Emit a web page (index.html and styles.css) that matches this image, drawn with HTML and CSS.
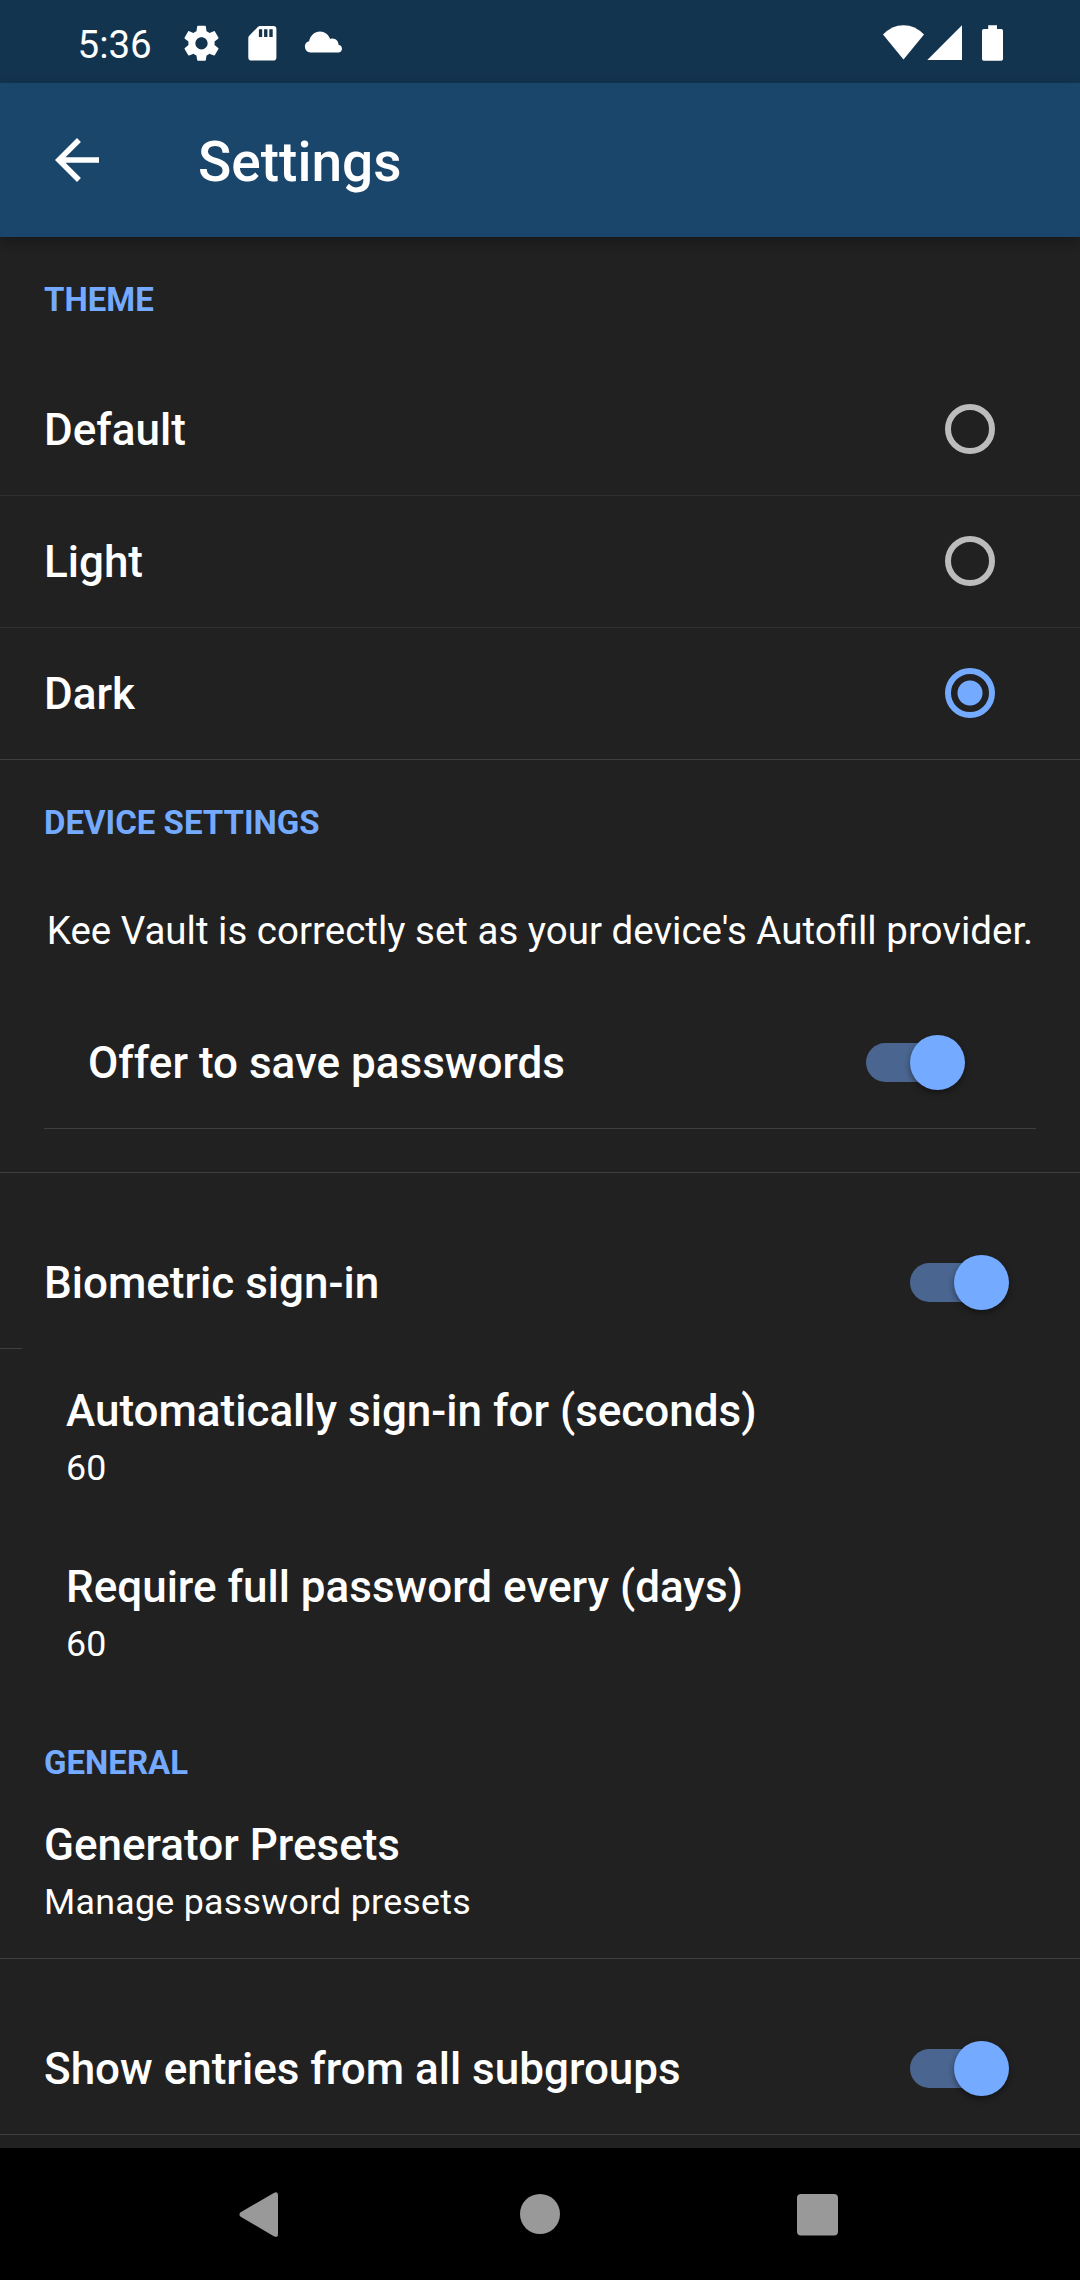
FILE: index.html
```html
<!DOCTYPE html>
<html lang="en">
<head>
  <meta charset="utf-8">
  <title>Settings</title>
  <link rel="stylesheet" href="styles.css">
</head>
<body>
  <div class="screen">
    <div class="status-bar">
      <span class="clock">5:36</span>
      <svg class="status-left" width="160" height="42" viewBox="180 22 160 42">
        <path transform="translate(180.5 22.3) scale(1.75)" d="M19.43 12.98c.04-.32.07-.64.07-.98s-.03-.66-.07-.98l2.11-1.65c.19-.15.24-.42.12-.64l-2-3.46c-.12-.22-.39-.3-.61-.22l-2.49 1c-.52-.4-1.08-.73-1.69-.98l-.38-2.65C14.46 2.18 14.25 2 14 2h-4c-.25 0-.46.18-.49.42l-.38 2.65c-.61.25-1.17.59-1.69.98l-2.49-1c-.23-.09-.49 0-.61.22l-2 3.46c-.13.22-.07.49.12.64l2.11 1.65c-.04.32-.07.65-.07.98s.03.66.07.98l-2.11 1.65c-.19.15-.24.42-.12.64l2 3.46c.12.22.39.3.61.22l2.49-1c.52.4 1.08.73 1.69.98l.38 2.65c.03.24.24.42.49.42h4c.25 0 .46-.18.49-.42l.38-2.65c.61-.25 1.17-.59 1.69-.98l2.49 1c.23.09.49 0 .61-.22l2-3.46c.12-.22.07-.49-.12-.64l-2.11-1.65zM12 15.5c-1.93 0-3.500-1.570-3.500-3.500s1.570-3.500 3.500-3.500 3.500 1.570 3.500 3.500-1.570 3.500-3.500 3.500z"/>
        <path fill-rule="evenodd" d="M260 26H273.300Q276.400 26 276.400 29.100V57.500Q276.400 60.600 273.300 60.600H251.400Q248.300 60.600 248.300 57.500V38Q248.300 36.700 249.200 35.800L257.800 27Q258.800 26 260 26ZM258.900 29.300V37H262.200V29.300ZM264.100 29.300V37H267.400V29.300ZM269.300 29.300V37H272.700V29.300Z"/>
        <path d="M310.400 52.400A5.700 5.700 0 0 1 309.100 41.200C310.200 35.500 314.600 31.500 320 31.500C324.500 31.500 328.400 34.300 330.100 39C334.600 37.400 338.500 40.600 338.600 44.900A3.800 3.800 0 0 1 338.900 52.400Z"/>
      </svg>
      <svg class="status-right" width="122" height="38" viewBox="882 24 122 38">
        <path d="M883 34.600Q891.800 25.200 903.500 25.200T924 34.600L903.500 59.600Z"/>
        <path d="M962 25.300V60H927.300Z"/>
        <path d="M988.200 25.200H997V29H1001.300Q1003 29 1003 30.700V59Q1003 60.700 1001.300 60.700H983.700Q982 60.700 982 59V30.700Q982 29 983.700 29H988.200Z"/>
      </svg>
    </div>

    <header class="app-bar">
      <svg class="back" width="66" height="66" viewBox="0 0 24 24"><path d="M20 11H7.830l5.590-5.590L12 4l-8 8 8 8 1.410-1.410L7.830 13H20v-2z"/></svg>
      <h1 class="app-title">Settings</h1>
    </header>

    <main class="content">
      <section>
        <h2 class="heading heading-theme">THEME</h2>
        <div class="row faint"><span class="title">Default</span><span class="radio"></span></div>
        <div class="row faint"><span class="title">Light</span><span class="radio"></span></div>
        <div class="row"><span class="title">Dark</span><span class="radio selected"></span></div>
      </section>

      <section class="device">
        <h2 class="heading heading-device">DEVICE SETTINGS</h2>
        <p class="message">Kee Vault is correctly set as your device's Autofill provider.</p>
        <div class="row row-inset"><span class="title">Offer to save passwords</span><span class="switch"></span></div>
      </section>

      <section>
        <div class="row row-spaced row-open"><span class="title">Biometric sign-in</span><span class="switch"></span></div>
        <div class="short-line"></div>
        <div class="tile"><span class="title">Automatically sign-in for (seconds)</span><span class="subtitle">60</span></div>
        <div class="tile"><span class="title">Require full password every (days)</span><span class="subtitle">60</span></div>
      </section>

      <section>
        <h2 class="heading heading-general">GENERAL</h2>
        <div class="tile tile-general"><span class="title">Generator Presets</span><span class="subtitle">Manage password presets</span></div>
        <div class="row row-spaced"><span class="title">Show entries from all subgroups</span><span class="switch"></span></div>
      </section>
    </main>

    <nav class="nav-bar">
      <svg width="602" height="48" viewBox="238 2190 602 48">
        <path d="M240.700 2212.200L273.800 2192.900Q278 2190.800 278 2195V2234Q278 2238.200 273.800 2236.200L240.700 2216.800Q238.200 2214.500 240.700 2212.200Z"/>
        <circle cx="540" cy="2214" r="20"/>
        <rect x="797" y="2194" width="41" height="41.500" rx="4"/>
      </svg>
    </nav>
  </div>
</body>
</html>
```
FILE: styles.css
```css
* {
  box-sizing: border-box;
}

body {
  margin: 0;
  background: #212121;
  color: #fff;
  font-family: Roboto, sans-serif;
}

h1,
h2,
p {
  margin: 0;
}

svg {
  display: block;
  fill: currentColor;
}

.screen {
  display: flex;
  flex-direction: column;
  width: 1080px;
  height: 2280px;
  overflow: hidden;
}

/* Status bar */
.status-bar {
  display: flex;
  flex: none;
  height: 83px;
  padding: 22px 76px 0 77.5px;
  background: #13344f;
}

.clock {
  width: 102.5px;
  font-size: 38.5px;
  line-height: 46px;
}

.status-left {
  overflow: visible;
}

.status-right {
  margin: 2px 0 0 auto;
}

/* App bar */
.app-bar {
  display: flex;
  flex: none;
  align-items: center;
  height: 154px;
  padding-left: 44px;
  background: #1b466b;
  box-shadow: 0 4px 12px rgba(0, 0, 0, 0.3);
}

.app-title {
  margin-left: 88px;
  padding-top: 4px;
  font-size: 55px;
  font-weight: 500;
  line-height: 66px;
}

/* Settings list */
.content {
  flex: 1;
  min-height: 0;
}

.heading {
  padding-left: 44px;
  color: #74aaff;
  font-size: 33px;
  font-weight: 700;
  line-height: 40px;
}

.heading-theme {
  height: 127px;
  padding-top: 43px;
}

.heading-device {
  height: 125px;
  padding-top: 43px;
}

.heading-general {
  height: 118px;
  padding-top: 42px;
}

.title {
  font-size: 44px;
  font-weight: 500;
  line-height: 52px;
}

.subtitle {
  font-size: 35.75px;
  letter-spacing: 0.28px;
  line-height: 42px;
}

.row {
  display: flex;
  align-items: center;
  justify-content: space-between;
  height: 132px;
  padding: 0 71px 0 44px;
  border-bottom: 1px solid #3e3e3e;
}

.faint {
  border-bottom-color: #303030;
}

.row-inset {
  height: 153px;
  margin: 0 44px;
  padding-top: 20px;
}

.row-inset .title {
  padding-top: 2px;
}

.row-spaced {
  height: 176px;
  padding-top: 44px;
}

.row-open {
  height: 175px;
  border-bottom: 0;
}

.short-line {
  width: 22px;
  height: 1px;
  background: #3e3e3e;
}

.device {
  padding-bottom: 43px;
  border-bottom: 1px solid #3e3e3e;
}

.message {
  height: 91px;
  font-size: 38.5px;
  line-height: 91px;
  text-align: center;
}

.tile {
  display: flex;
  flex-direction: column;
  gap: 10px;
  height: 176px;
  padding: 36px 0 0 66px;
}

.tile-general {
  height: 140px;
  padding: 0 0 0 44px;
  border-bottom: 1px solid #3e3e3e;
}

/* Controls */
.radio {
  width: 50px;
  height: 50px;
  margin: 0 14px 1px 0;
  border: 6px solid #bcbcbc;
  border-radius: 50%;
}

.selected {
  border-color: #74aaff;
  background: radial-gradient(circle, #74aaff 12px, transparent 13px);
}

.switch {
  display: flex;
  align-items: center;
  justify-content: flex-end;
  width: 99px;
  height: 55px;
}

.switch::before {
  content: "";
  width: 90px;
  height: 39px;
  margin-right: -46px;
  border-radius: 20px;
  background: #4a658f;
}

.switch::after {
  content: "";
  width: 55px;
  height: 55px;
  border-radius: 50%;
  background: #74aaff;
  box-shadow: 0 3px 6px rgba(0, 0, 0, 0.4);
}

/* Navigation bar */
.nav-bar {
  flex: none;
  height: 132px;
  padding: 42px 0 0 238px;
  background: #000;
  color: #999;
}
```
